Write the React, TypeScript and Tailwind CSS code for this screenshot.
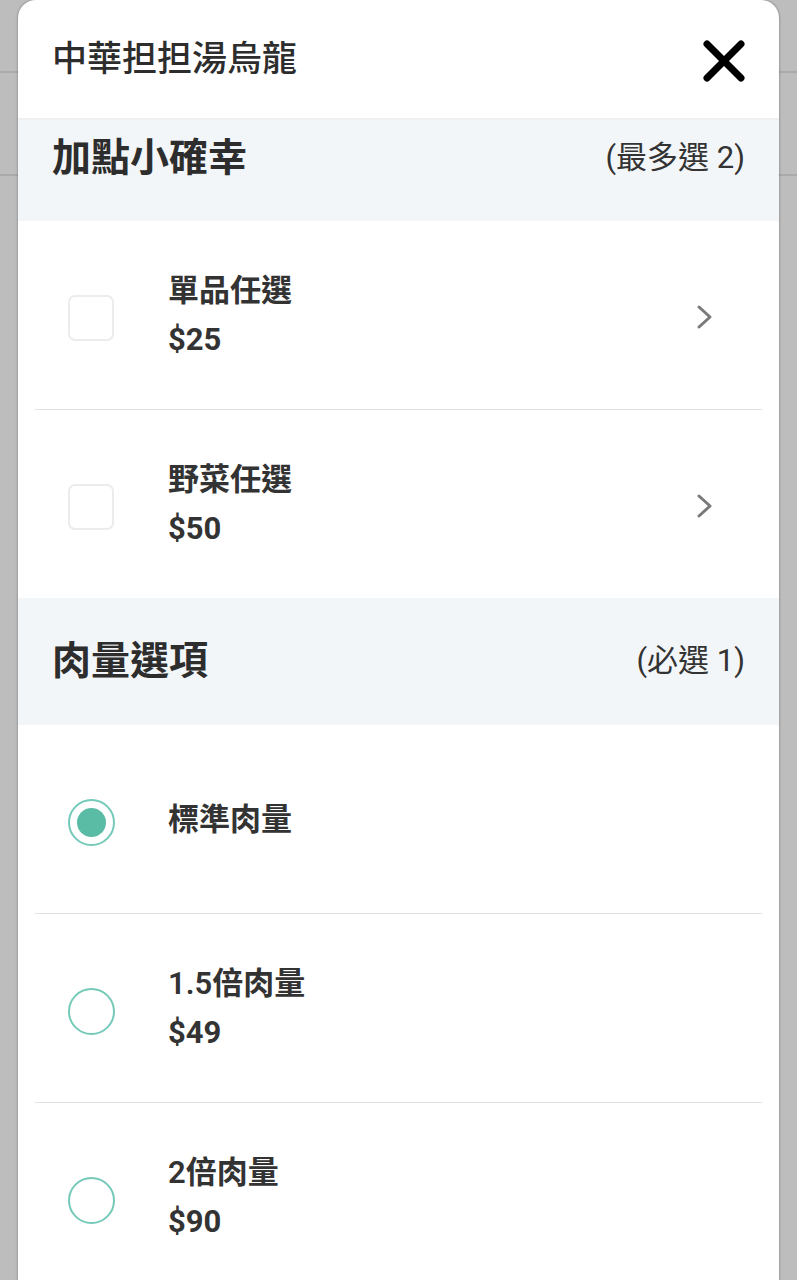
import React from "react";

const FONT = { fontFamily: "Roboto, 'Noto Sans CJK TC', 'Noto Sans', sans-serif" };

function Chevron() {
  return (
    <svg width="20" height="26" viewBox="0 0 20 26" className="mt-[4px] shrink-0">
      <polyline points="4,3 15,13 4,23" fill="none" stroke="#7a7a7a" strokeWidth="3" strokeLinecap="round" strokeLinejoin="round" />
    </svg>
  );
}

function CheckRow({ label, price, last }: { label: string; price: string; last?: boolean }) {
  return (
    <div className="flex flex-col">
      <div className="flex h-[188px] items-center pl-[50px] pr-[64px]">
        <div className="mt-[6px] h-[46px] w-[46px] shrink-0 rounded-[7px] border-2 border-[#ececec] bg-white" />
        <div className="ml-[54px] flex flex-1 flex-col">
          <span className="text-[31px] font-semibold leading-[49px] text-[#333]">{label}</span>
          <span className="text-[31px] font-bold leading-[49px] text-[#333]">{price}</span>
        </div>
        <Chevron />
      </div>
      {!last && <div className="mx-[17px] h-px bg-[#e2e2e2]" />}
    </div>
  );
}

function RadioRow({ label, price, checked, last }: { label: string; price?: string; checked?: boolean; last?: boolean }) {
  return (
    <div className="flex flex-col">
      <div className="flex h-[188px] items-center pl-[50px] pr-[64px]">
        <div className="mt-[6px] flex h-[47px] w-[47px] shrink-0 items-center justify-center rounded-full border-2 border-[#74c9b8] bg-white">
          {checked && <div className="h-[29px] w-[29px] rounded-full bg-[#5bbca6]" />}
        </div>
        <div className="ml-[53px] flex flex-1 flex-col">
          <span className="text-[31px] font-semibold leading-[49px] text-[#333]">{label}</span>
          {price && <span className="text-[31px] font-bold leading-[49px] text-[#333]">{price}</span>}
        </div>
      </div>
      {!last && <div className="mx-[17px] h-px bg-[#e2e2e2]" />}
    </div>
  );
}

export default function App() {
  return (
    <div className="relative h-[1280px] w-[797px] overflow-hidden bg-[#bdbdbd]" style={FONT}>
      <div className="absolute left-0 right-0 top-[71px] h-[2px] bg-[#aaaaaa]" />
      <div className="absolute left-0 right-0 top-[174px] h-[2px] bg-[#aaaaaa]" />
      <div className="relative ml-[18px] h-[1280px] w-[761px] overflow-hidden rounded-t-[18px] bg-white shadow-[0_0_2px_1px_rgba(0,0,0,0.18)]">
        <div className="flex h-[120px] items-center justify-between border-b-[2px] border-[#eef0f2] pl-[34px] pr-[32px]">
          <span className="mt-[3px] text-[35px] font-medium text-[#2d2d2d]">中華担担湯烏龍</span>
          <svg width="46" height="46" viewBox="0 0 46 46" className="mt-[4px]">
            <line x1="6" y1="6" x2="40" y2="40" stroke="#000" strokeWidth="7" strokeLinecap="round" />
            <line x1="40" y1="6" x2="6" y2="40" stroke="#000" strokeWidth="7" strokeLinecap="round" />
          </svg>
        </div>
        <div className="flex h-[101px] items-center justify-between bg-[#f3f6f8] pb-[24px] pl-[34px] pr-[34px]">
          <span className="text-[39px] font-semibold text-[#2d2d2d]">加點小確幸</span>
          <span className="text-[31px] text-[#333]">(最多選 2)</span>
        </div>
        <CheckRow label="單品任選" price="$25" />
        <CheckRow label="野菜任選" price="$50" last />
        <div className="flex h-[127px] items-center justify-between bg-[#f3f6f8] pl-[34px] pr-[34px]">
          <span className="text-[39px] font-semibold text-[#2d2d2d]">肉量選項</span>
          <span className="text-[31px] text-[#333]">(必選 1)</span>
        </div>
        <RadioRow label="標準肉量" checked />
        <RadioRow label="1.5倍肉量" price="$49" />
        <RadioRow label="2倍肉量" price="$90" last />
      </div>
    </div>
  );
}
